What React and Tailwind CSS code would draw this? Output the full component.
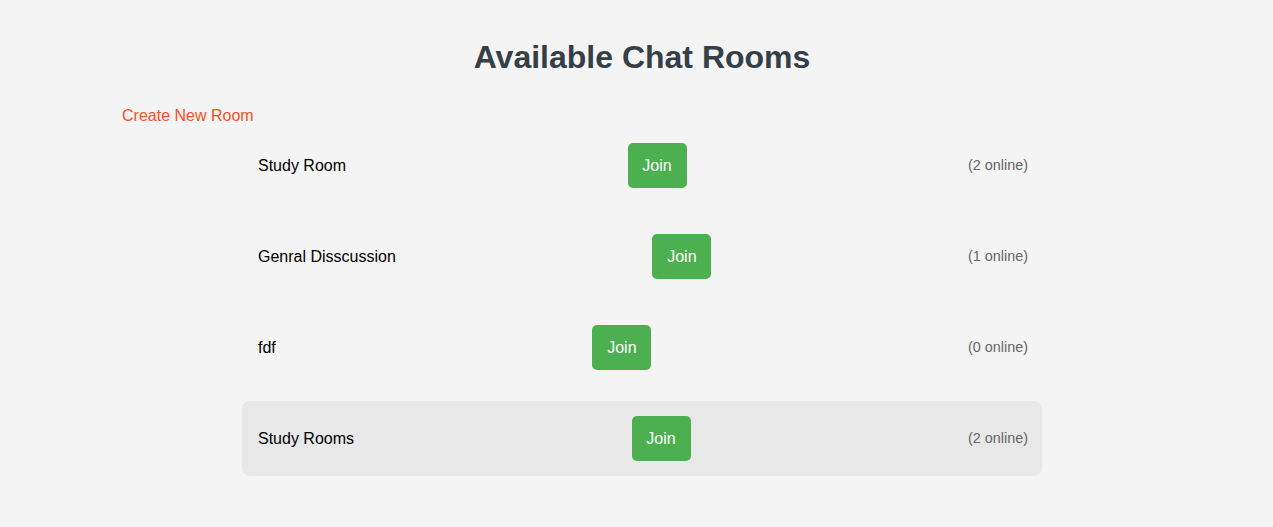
export default function App() {
  const rooms = [
    { name: "Study Room", online: 2 },
    { name: "Genral Disscussion", online: 1 },
    { name: "fdf", online: 0 },
    { name: "Study Rooms", online: 2, hover: true },
  ];
  return (
    <div
      className="min-h-[527px] w-full bg-[#f4f4f4] pl-[11px]"
      style={{ fontFamily: '"Liberation Sans", Arial, sans-serif' }}
    >
      <div className="flex flex-col">
        <h1 className="mt-[39px] text-center text-[32px] leading-[37px] font-bold text-[#353f47]">
          Available Chat Rooms
        </h1>
        <div className="mt-[28px] pl-[111px]">
          <a className="text-[16px] leading-[18px] text-[#f4511e] cursor-pointer">
            Create New Room
          </a>
        </div>
        <div className="flex flex-col items-center gap-[16px]">
          {rooms.map((r) => (
            <div
              key={r.name}
              className={`flex h-[75px] w-[800px] items-center justify-between rounded-[8px] pl-[16px] pr-[14px] ${
                r.hover ? "bg-[#e8e8e8]" : ""
              }`}
            >
              <span className="text-[16px] leading-[18px] text-black">{r.name}</span>
              <button className="flex h-[45px] w-[59px] items-center justify-center rounded-[5px] bg-[#4caf50] text-[16px] text-white">
                Join
              </button>
              <span className="text-[14.4px] leading-[17px] text-[#666]">
                ({r.online} online)
              </span>
            </div>
          ))}
        </div>
      </div>
    </div>
  );
}
